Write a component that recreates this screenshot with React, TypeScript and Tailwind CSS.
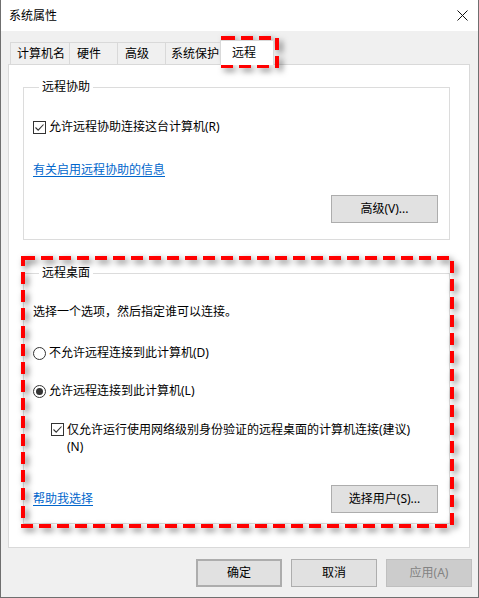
import React from "react";

const CheckBox = () => (
  <span className="w-[13px] h-[13px] border border-[#333333] bg-white flex items-center justify-center shrink-0">
    <svg width="11" height="11" viewBox="0 0 11 11">
      <path d="M1.5 5.5 L4.2 8.2 L9.5 2.5" stroke="#333333" strokeWidth="1.1" fill="none" />
    </svg>
  </span>
);

const Radio = ({ checked }: { checked?: boolean }) => (
  <span className="w-[13px] h-[13px] rounded-full border border-[#333333] bg-white flex items-center justify-center shrink-0">
    {checked && <span className="w-[7px] h-[7px] rounded-full bg-[#333333]" />}
  </span>
);

const Button = ({ label, className = "" }: { label: string; className?: string }) => (
  <button
    className={
      "h-[28px] flex items-center justify-center bg-[#e1e1e1] border border-[#adadad] text-black text-[12px] " +
      className
    }
  >
    {label}
  </button>
);

const RedBox = ({ x, y, w, h }: { x: number; y: number; w: number; h: number }) => (
  <svg
    className="absolute drop-shadow-[3px_3px_3px_rgba(0,0,0,0.55)] pointer-events-none"
    style={{ left: x - 1, top: y, width: w, height: h }}
    viewBox={`0 0 ${w} ${h}`}
  >
    <rect x={2} y={2} width={w - 4} height={h - 4} fill="none" stroke="#ff0000" strokeWidth={4} strokeDasharray="12 6" />
  </svg>
);

export default function App() {
  return (
    <div className="relative w-[479px] h-[598px] bg-[#f0f0f0] border-x border-b border-[#6f6f6f] text-[12px] leading-[16px] text-black font-['Noto_Sans','Noto_Sans_CJK_SC',sans-serif] overflow-hidden">
      {/* title bar */}
      <div className="h-[31px] bg-white flex items-center justify-between pl-[8px] pr-[10px]">
        <span>系统属性</span>
        <svg width="11" height="11" viewBox="0 0 11 11">
          <path d="M0.5 0.5 L10.5 10.5 M10.5 0.5 L0.5 10.5" stroke="#111111" strokeWidth="1" />
        </svg>
      </div>

      <div className="pl-[7px] pt-[9px]">
        {/* tabs */}
        <div className="relative z-10 -mb-px flex items-end h-[25px] pl-[2px]">
          <div className="mb-px h-[22px] w-[59px] border-l border-t border-[#d9d9d9] pl-[6px] flex items-center">计算机名</div>
          <div className="mb-px h-[22px] w-[48px] border-l border-t border-[#d9d9d9] pl-[7px] flex items-center">硬件</div>
          <div className="mb-px h-[22px] w-[48px] border-l border-t border-[#d9d9d9] pl-[7px] flex items-center">高级</div>
          <div className="mb-px h-[22px] w-[57px] border-l border-t border-[#d9d9d9] pl-[5px] flex items-center">系统保护</div>
          <div className="-ml-[2px] h-[25px] w-[54px] border-x border-t border-[#d9d9d9] bg-white pl-[11px] pb-[1px] flex items-center">远程</div>
        </div>

        {/* panel */}
        <div className="w-[462px] h-[484px] border border-[#d9d9d9] bg-white">
          <fieldset className="ml-[14px] mt-[14px] w-[427px] border border-[#dcdcdc] pl-[9px] pr-[11px] pt-[24px] pb-[16px]">
            <legend className="ml-[6px] px-[3px]">远程协助</legend>
            <div className="flex items-center gap-[3px] h-[16px]">
              <CheckBox />
              <span>允许远程协助连接这台计算机(R)</span>
            </div>
            <div className="mt-[27px] h-[16px]">
              <span className="text-[#0066cc] underline underline-offset-2">有关启用远程协助的信息</span>
            </div>
            <div className="mt-[17px] flex justify-end">
              <Button label="高级(V)..." className="w-[107px] h-[27px]" />
            </div>
          </fieldset>

          <fieldset className="ml-[14px] mt-[25px] w-[427px] border border-[#dcdcdc] pl-[9px] pr-[11px] pt-[23px] pb-[10px]">
            <legend className="ml-[6px] px-[3px]">远程桌面</legend>
            <div className="h-[16px]">选择一个选项，然后指定谁可以连接。</div>
            <div className="mt-[25px] flex items-center gap-[3px] h-[16px]">
              <Radio />
              <span>不允许远程连接到此计算机(D)</span>
            </div>
            <div className="mt-[22px] flex items-center gap-[3px] h-[16px]">
              <Radio checked />
              <span>允许远程连接到此计算机(L)</span>
            </div>
            <div className="mt-[22px] ml-[18px] flex items-start gap-[3px] leading-[17px]">
              <span className="mt-[2px]">
                <CheckBox />
              </span>
              <span>
                仅允许运行使用网络级别身份验证的远程桌面的计算机连接(建议)
                <br />
                (N)
              </span>
            </div>
            <div className="mt-[30px] flex items-center justify-between">
              <span className="text-[#0066cc] underline underline-offset-2">帮助我选择</span>
              <Button label="选择用户(S)..." className="w-[107px] h-[27px]" />
            </div>
          </fieldset>
        </div>

        {/* dialog buttons */}
        <div className="mt-[11px] flex justify-end gap-[9px] pr-[6px]">
          <Button label="确定" className="w-[86px] border-2 border-[#0078d7]" />
          <Button label="取消" className="w-[86px]" />
          <button className="w-[86px] h-[28px] flex items-center justify-center bg-[#cccccc] border border-[#bfbfbf] text-[#838383] text-[12px]">
            应用(A)
          </button>
        </div>
      </div>

      <RedBox x={221} y={36} w={58} h={32} />
      <RedBox x={21} y={256} w={433} h={272} />
    </div>
  );
}
